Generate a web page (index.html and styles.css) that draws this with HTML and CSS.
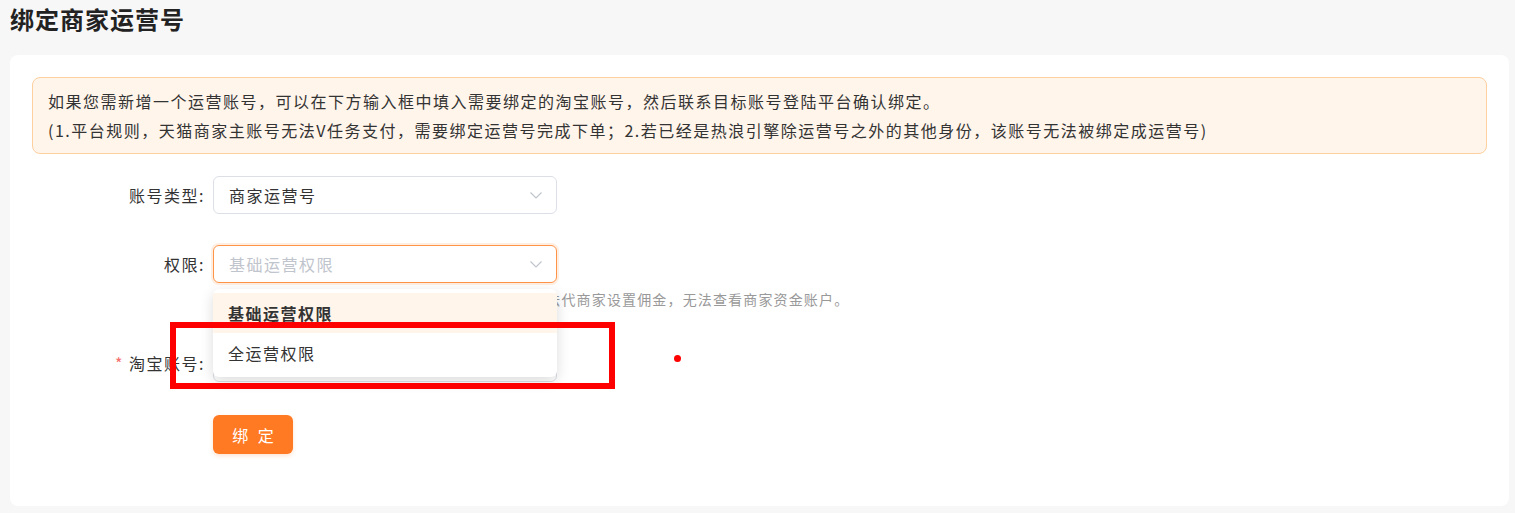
FILE: index.html
```html
<!DOCTYPE html>
<html lang="zh-CN">

<head>
    <meta charset="UTF-8">
    <meta name="viewport" content="width=device-width, initial-scale=1.0">
    <title>绑定商家运营号</title>

    <link rel="stylesheet" href="styles.css">
</head>

<body>
    <div class="page">
        <h2 class="page-title">绑定商家运营号</h2>
        <div class="card">
            <div class="notice">
                <p>如果您需新增一个运营账号，可以在下方输入框中填入需要绑定的淘宝账号，然后联系目标账号登陆平台确认绑定。</p>
                <p>(1.平台规则，天猫商家主账号无法V任务支付，需要绑定运营号完成下单；2.若已经是热浪引擎除运营号之外的其他身份，该账号无法被绑定成运营号)</p>
            </div>

            <form class="bind-form">
                <div class="form-row">
                    <label class="form-label">账号类型:</label>
                    <div class="form-field">
                        <div class="select">
                            <span class="select-value">商家运营号</span>
                            <svg class="select-arrow" width="12" height="7" viewBox="0 0 12 7"><path d="M0.5 0.5 L6 6 L11.5 0.5" fill="none" stroke="#c0c4cc" stroke-width="1.2"/></svg>
                        </div>
                    </div>
                </div>

                <div class="form-row row-role">
                    <label class="form-label">权限:</label>
                    <div class="form-field">
                        <div class="select is-focus">
                            <span class="select-value placeholder">基础运营权限</span>
                            <svg class="select-arrow" width="12" height="7" viewBox="0 0 12 7"><path d="M0.5 0.5 L6 6 L11.5 0.5" fill="none" stroke="#c0c4cc" stroke-width="1.2"/></svg>
                            <ul class="dropdown">
                                <li class="dropdown-item selected">基础运营权限</li>
                                <li class="dropdown-item">全运营权限</li>
                            </ul>
                        </div>
                        <div class="form-tip">基础运营权限：可发布任务、管理订单与数据，无法代商家设置佣金，无法查看商家资金账户。</div>
                    </div>
                </div>

                <div class="form-row row-account">
                    <label class="form-label"><span class="required">*</span>淘宝账号:</label>
                    <div class="form-field">
                        <input class="input" type="text">
                    </div>
                </div>

                <div class="form-row row-submit">
                    <span class="form-label"></span>
                    <div class="form-field">
                        <button type="button" class="btn-primary">绑 定</button>
                    </div>
                </div>
            </form>
        </div>
    </div>

    <!-- annotation marks -->
    <div class="mark-box"></div>
    <div class="mark-dot"></div>
</body>

</html>
```

FILE: styles.css
```css
html {
    height: 100%;
}

body {
    margin: 0;
    padding: 0;
    background: #f7f7f7;
    color: #333;
    font-family: "Noto Sans CJK SC", "Noto Sans", sans-serif;
}

.page {
    padding: 3px 6px 0 10px;
}

.page-title {
    margin: 0 0 20px;
    font-size: 24px;
    line-height: 32px;
    font-weight: 700;
    letter-spacing: 1px;
    color: #222;
}

.card {
    background: #fff;
    border-radius: 8px;
    padding: 22px 22px 52px;
}

.notice {
    background: #fff5eb;
    border: 1px solid #fdd09f;
    border-radius: 8px;
    padding: 9px 15px 8px;
}

.notice p {
    margin: 0;
    font-size: 16px;
    line-height: 29px;
    letter-spacing: 1.5px;
    color: #333;
}

.bind-form {
    margin-top: 22px;
}

.form-row {
    display: flex;
    align-items: flex-start;
    margin-bottom: 31px;
}

.form-row.row-role {
    margin-bottom: 0;
}

.form-row.row-account {
    margin-top: 35px;
    margin-bottom: 33px;
}

.form-label {
    width: 173px;
    padding-right: 8px;
    text-align: right;
    font-size: 16px;
    line-height: 38px;
    letter-spacing: 1.5px;
    color: #333;
    flex-shrink: 0;
}

.required {
    color: #f56c6c;
    margin-right: 5px;
}

.form-field {
    width: 344px;
}

.select {
    position: relative;
    height: 38px;
    border: 1px solid #dcdfe6;
    border-radius: 6px;
    box-sizing: border-box;
    padding: 0 15px;
    display: flex;
    align-items: center;
    background: #fff;
}

.select.is-focus {
    border-color: #ff9448;
    box-shadow: 0 0 0 2px rgba(255, 140, 60, 0.15);
}

.select-value {
    flex: 1;
    font-size: 16px;
    letter-spacing: 1.5px;
    color: #333;
}

.select-value.placeholder {
    color: #c0c4cc;
}

.select-arrow {
    margin-right: -1px;
}

.dropdown {
    position: absolute;
    top: 43px;
    left: -1px;
    right: -1px;
    z-index: 10;
    margin: 0;
    padding: 4px 0;
    list-style: none;
    background: #fff;
    border-radius: 6px;
    box-shadow: 0 4px 14px rgba(0, 0, 0, 0.14);
}

.dropdown-item {
    height: 40px;
    line-height: 40px;
    padding: 0 15px;
    font-size: 16px;
    letter-spacing: 1.5px;
    color: #333;
}

.dropdown-item.selected {
    background: #fff5eb;
    font-weight: 700;
}

.form-tip {
    margin-top: 6px;
    font-size: 14px;
    line-height: 20px;
    letter-spacing: 1.15px;
    color: #999;
    white-space: nowrap;
}

.input {
    display: block;
    width: 100%;
    height: 38px;
    box-sizing: border-box;
    border: 1px solid #dcdfe6;
    border-radius: 6px;
    outline: none;
    padding: 0 15px;
    font-size: 16px;
}

.btn-primary {
    width: 80px;
    height: 39px;
    border: none;
    border-radius: 6px;
    background: #ff7a23;
    color: #fff;
    font-family: inherit;
    font-size: 16px;
    letter-spacing: 3px;
    padding: 0 0 0 3px;
    cursor: pointer;
    box-shadow: 0 2px 4px rgba(255, 122, 35, 0.2);
}

.row-submit {
    margin-bottom: 0;
}

.mark-box {
    position: absolute;
    left: 170px;
    top: 322px;
    width: 433px;
    height: 55px;
    border: 6px solid #ff0000;
    z-index: 20;
}

.mark-dot {
    position: absolute;
    left: 674px;
    top: 355px;
    width: 7px;
    height: 7px;
    border-radius: 50%;
    background: #ff0000;
}
```
